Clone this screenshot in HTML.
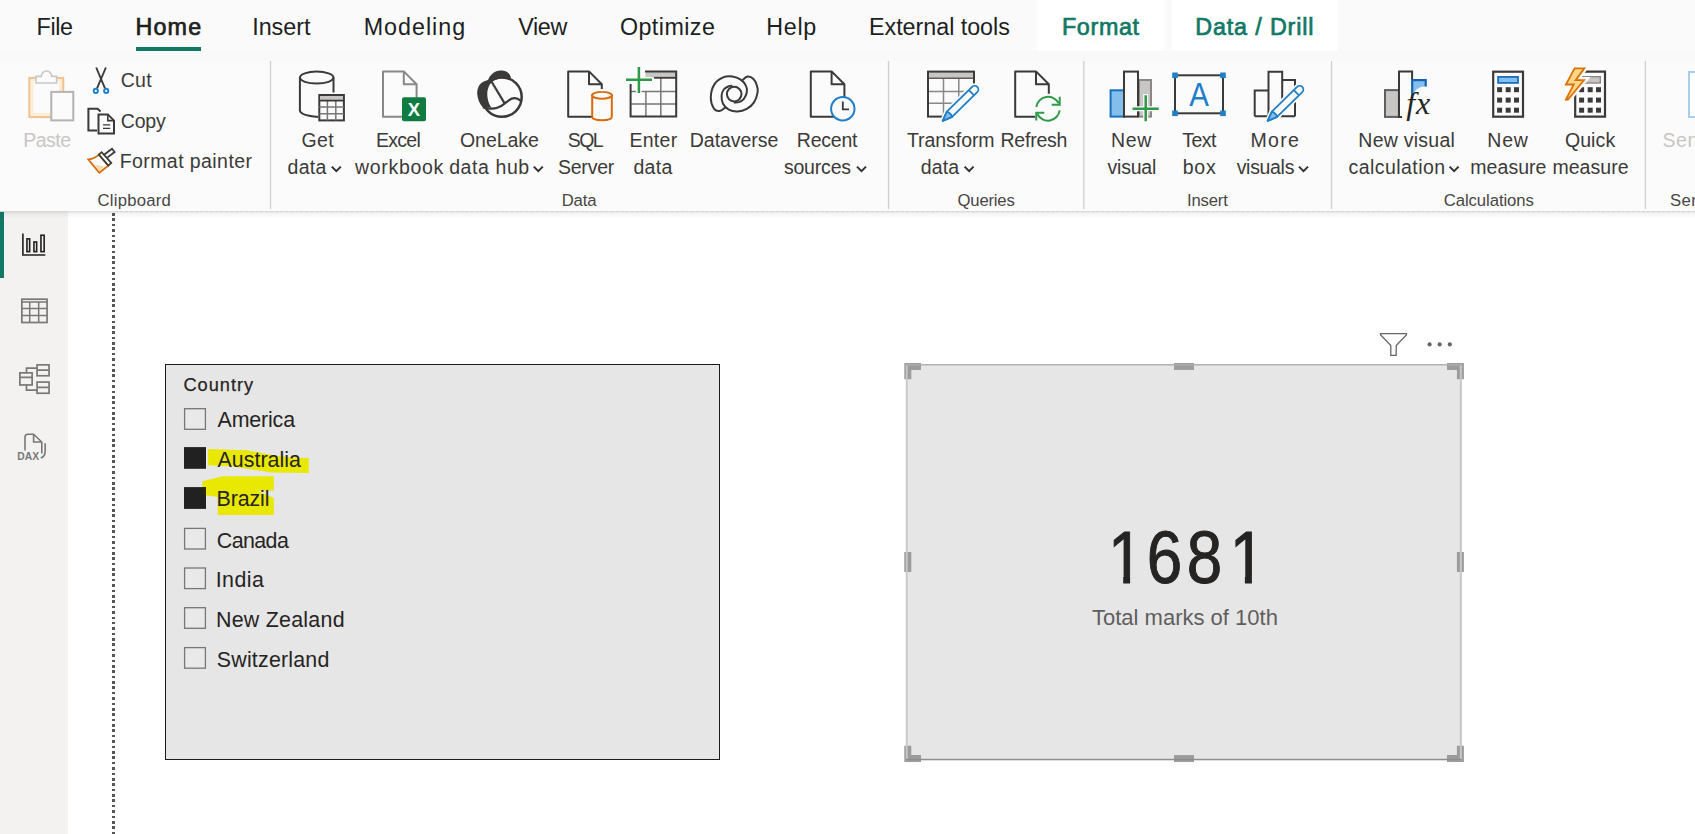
<!DOCTYPE html>
<html><head><meta charset="utf-8"><title>Power BI</title>
<style>
html,body{margin:0;padding:0}
body{width:1695px;height:834px;position:relative;overflow:hidden;background:#fff;font-family:'Liberation Sans',sans-serif}
.t{position:absolute;white-space:pre}
.abs{position:absolute}
</style></head>
<body>
<!-- backgrounds -->
<div class="abs" style="left:0;top:0;width:1695px;height:60px;background:#fafafa"></div>
<div class="abs" style="left:0;top:51px;width:1695px;height:9.500px;background:#f9f9f9"></div>
<div class="abs" style="left:0;top:60.500px;width:1695px;height:150.500px;background:#fbfbfb"></div>
<div class="abs" style="left:1037px;top:0;width:128px;height:51px;background:#fff"></div>
<div class="abs" style="left:1172px;top:0;width:166px;height:51px;background:#fff"></div>
<div class="abs" style="left:136px;top:47px;width:65px;height:4px;background:#117865"></div>
<!-- sidebar -->
<div class="abs" style="left:0;top:211px;width:68px;height:623px;background:#f3f2f1"></div>
<div class="abs" style="left:0;top:212px;width:4px;height:66px;background:#117865"></div>
<!-- canvas dotted line -->
<div class="abs" style="left:112.200px;top:212.800px;width:2.600px;height:622px;background:repeating-linear-gradient(to bottom,#555 0,#555 2.600px,transparent 2.600px,transparent 5.380px)"></div>
<div class="abs" style="left:0;top:211px;width:1695px;height:7px;background:linear-gradient(rgba(0,0,0,0.130),rgba(0,0,0,0.040) 40%,rgba(0,0,0,0))"></div>
<div class="abs" style="left:115px;top:211px;width:1580px;height:0;border-top:1px dashed #d4d4d4"></div>
<!-- slicer -->
<div class="abs" style="left:165px;top:364px;width:553px;height:394px;background:#e6e6e6;border:1.3px solid #1b1b1b"></div>
<!-- card -->
<div class="abs" style="left:906px;top:364px;width:556px;height:396.300px;background:#e6e6e6"></div>
<svg class="abs" style="left:0;top:0" width="1695" height="834" viewBox="0 0 1695 834" fill="none" stroke-linecap="butt" stroke-linejoin="miter">
<!-- group dividers -->
<g stroke="#d2d0ce" stroke-width="1.3">
<path d="M270.5,61V209M888.5,61V209M1083.8,61V209M1331.5,61V209M1645.4,61V209"/>
</g>
<!-- chevrons -->
<g transform="translate(331.8,166.6)"><path d="M0,0L4.5,4.5L9,0" stroke="#323130" stroke-width="2"/></g>
<g transform="translate(533.8,166.6)"><path d="M0,0L4.5,4.5L9,0" stroke="#323130" stroke-width="2"/></g>
<g transform="translate(857,166.6)"><path d="M0,0L4.5,4.5L9,0" stroke="#323130" stroke-width="2"/></g>
<g transform="translate(964.6,166.6)"><path d="M0,0L4.5,4.5L9,0" stroke="#323130" stroke-width="2"/></g>
<g transform="translate(1299,166.6)"><path d="M0,0L4.5,4.5L9,0" stroke="#323130" stroke-width="2"/></g>
<g transform="translate(1449.6,166.6)"><path d="M0,0L4.5,4.5L9,0" stroke="#323130" stroke-width="2"/></g>

<!-- Paste (disabled) -->
<g stroke-width="2">
<rect x="29.300" y="77.900" width="34" height="39.200" fill="#faefd6" stroke="#f2c193"/>
<rect x="33.500" y="81" width="25.500" height="32" fill="#fbfbfb" stroke="none"/>
<path d="M36,83V76.400H41.300a5.200,5.400 0 0 1 10.400,0H56.600V83Z" fill="#fbfbfb" stroke="#c8c8c8" stroke-width="1.600"/>
<rect x="51.300" y="91.900" width="22" height="28.500" fill="#fbfbfb" stroke="#b4b3b2"/>
</g>
<!-- Cut -->
<g stroke="#3b3a39" stroke-width="1.900">
<path d="M96.2,67.5L105,88.3M105.9,67.5L97,88.3"/>
</g>
<g stroke="#1f7fc9" stroke-width="1.900"><circle cx="95.800" cy="90.900" r="2.100"/><circle cx="106.200" cy="90.900" r="2.100"/></g>
<!-- Copy -->
<g stroke="#3b3a39" stroke-width="2">
<path d="M97,130.5H88.4V108.8H97.6L100.6,111.6"/>
<path d="M98.5,114.4H107.8L114,120.6V133.5H98.5Z" fill="#fbfbfb"/>
<path d="M107.8,114.4V120.6H114" stroke-width="1.6"/>
<path d="M103,124.9H110.2M103,128.4H110.2" stroke-width="1.4"/>
</g>
<!-- Format painter -->
<g stroke-width="1.8">
<path d="M88.3,159.4Q95,158.5 98.9,154.6L108.3,165.6L99.3,172.8Z" stroke="#d86b0d" fill="#fbfbfb"/>
<path d="M94.5,164.4L104,166.6L99.5,171.5Z" fill="#fbd9a6" stroke="none"/>
<path d="M98.9,154.6L101.6,152.2L111.3,163L108.3,165.6Z" stroke="#3b3a39" fill="#fbfbfb"/>
<path d="M104.3,154.5L112,148.8L114.6,152L107.3,157.6" stroke="#3b3a39"/>
</g>

<!-- Get data -->
<g stroke="#3b3a39" stroke-width="2">
<ellipse cx="316.7" cy="77.6" rx="16.8" ry="6"/>
<path d="M299.900,77.600V110.800Q301,115.600 318,117M333.500,77.600V92.500"/>
</g>
<rect x="319.300" y="95" width="24.600" height="25.400" fill="#fbfbfb" stroke="#3b3a39" stroke-width="2"/>
<rect x="320.3" y="96" width="22.6" height="4.2" fill="#c8c6c4"/>
<path d="M319.300,107H343.900M319.300,113.800H343.900M327.400,100.400V120.400M335.800,100.400V120.400" stroke="#797775" stroke-width="1.500"/><path d="M319.300,100.600H343.900" stroke="#3b3a39" stroke-width="1.800"/>
<!-- Excel -->
<g transform="translate(382,0)" stroke="#8a8886" stroke-width="2"><path d="M1,71.400H21.800L34.600,84.200V116.800H1Z M21.800,71.400V84.200H34.600" stroke-linejoin="round"/></g>
<rect x="402" y="97.2" width="24" height="24" rx="2" fill="#107c41"/>
<text x="414" y="116" text-anchor="middle" font-family="'Liberation Sans',sans-serif" font-weight="700" font-size="18.5" fill="#fff">X</text>
<!-- OneLake -->
<circle cx="502" cy="97.100" r="19.700" stroke="#3b3a39" stroke-width="2.500"/>
<path d="M482.900,107.400C479.500,104 477.500,99 477.200,93.800C477,88 479.500,83.500 482.900,81.900C485,80.900 487,80.500 488,80.100C489,77 490.500,75.500 491.600,74.400C494,72 496.500,70.900 498.800,70.800C500.500,70.500 502,70.500 503.800,70.800C506.500,71.300 508,72.500 508.800,73.600C510,75 510.800,76.800 511,78.300L511.0,78.5C509.6,78.5 505.1,78.0 502.4,78.3C499.6,78.6 496.4,79.5 494.5,80.3C492.6,81.1 492.0,81.6 490.9,83.0C489.8,84.4 488.6,86.7 488.0,88.7C487.4,90.7 487.2,92.9 487.3,95.2C487.4,97.5 488.0,100.3 488.7,102.4C489.4,104.5 491.1,106.9 491.6,107.8Z" fill="#3b3a39"/>
<g stroke="#3b3a39" stroke-width="2.200"><path d="M491.300,81.300L504.500,103.100"/><path d="M482.900,107.200C486,108.500 493,109.500 497.300,107.800C503,106 505.500,102.500 508.800,100.300C512,98 515,97.800 517.500,98.800C519,99.500 520.300,100.500 521,101.300"/></g>
<!-- SQL Server -->
<g transform="translate(567.200,0)" stroke="#3b3a39" stroke-width="2"><path d="M1,71.400H21.800L34.600,84.200V116.800H1Z M21.800,71.400V84.200H34.600" stroke-linejoin="round"/></g>
<g stroke="#d86b0d" stroke-width="2">
<path d="M592.200,95.300V116.500Q592.200,120.200 602,120.200T611.800,116.500V95.300Z" fill="#fbfbfb"/>
<ellipse cx="602" cy="95.300" rx="9.800" ry="3.500" fill="#fbfbfb"/>
</g>
<rect x="589.700" y="89" width="24.600" height="2.200" fill="#fbfbfb"/>
<!-- Enter data -->
<rect x="645.500" y="71.800" width="31" height="6" fill="#c8c6c4"/>
<path d="M645.900,91.600V116.500M660.800,78V116.500M630.600,91.600H676.200M630.600,104H676.200" stroke="#797775" stroke-width="1.500"/>
<path d="M654.100,77.800H676.200" stroke="#3b3a39" stroke-width="1.800"/>
<path d="M645,71.600H676.200V116.600H630.600V84" stroke="#3b3a39" stroke-width="2"/>
<path d="M626,79.700H652M638.900,67V93" stroke="#fbfbfb" stroke-width="5.500"/>
<path d="M626,79.700H652M638.900,67V93" stroke="#2e9a48" stroke-width="2.500"/>
<!-- Dataverse -->
<g stroke="#3b3a39" stroke-width="2">
<path d="M725.5,107.4C724.5,108.0 721.4,110.9 719.4,111.0C717.4,111.2 715.1,110.4 713.7,108.2C712.2,105.9 710.7,101.3 710.8,97.4C710.9,93.4 712.2,87.8 714.4,84.4C716.5,81.1 720.7,78.5 723.7,77.2C726.7,75.9 729.6,76.2 732.4,76.5C735.1,76.9 738.0,77.8 740.3,79.4C742.6,80.9 745.0,83.7 746.0,85.9C747.1,88.0 747.1,90.2 746.8,92.3C746.4,94.5 745.2,97.2 743.9,98.8C742.6,100.4 740.5,101.5 738.8,102.1C737.2,102.6 734.7,102.4 733.8,102.4"/>
<path d="M742.4,80.1C743.3,79.5 745.7,76.8 747.5,76.5C749.3,76.3 751.7,77.2 753.2,78.7C754.8,80.1 756.1,82.9 756.8,85.1C757.6,87.4 758.0,89.5 757.6,92.3C757.1,95.2 755.8,99.7 754.0,102.4C752.2,105.2 749.5,107.4 746.8,108.9C744.0,110.4 740.4,111.3 737.4,111.4C734.4,111.5 731.2,110.9 728.8,109.6C726.4,108.3 724.2,106.1 723.0,103.8C721.8,101.6 721.5,98.3 721.6,95.9C721.7,93.5 722.5,91.1 723.7,89.5C724.9,87.8 727.3,86.8 728.8,86.2C730.2,85.6 731.8,85.8 732.4,85.7"/>
<circle cx="734.200" cy="94.100" r="7.300"/>
</g>
<!-- Recent sources -->
<g transform="translate(809.8,0)" stroke="#3b3a39" stroke-width="2"><path d="M1,71.400H21.800L34.600,84.200V116.800H1Z M21.800,71.400V84.200H34.600" stroke-linejoin="round"/></g>
<circle cx="842.8" cy="108.7" r="11.7" fill="#fbfbfb" stroke="#1f7fc9" stroke-width="2"/>
<path d="M842.8,101.6V109.4H849" stroke="#3b3a39" stroke-width="1.8"/>
<!-- Transform data -->
<rect x="928" y="72" width="46" height="6.3" fill="#c8c6c4"/>
<path d="M943.5,78V116.5M958.8,78V116.5M928,91.600H974M928,103.200H974" stroke="#8a8886" stroke-width="1.500"/><path d="M928,78.200H974" stroke="#605e5c" stroke-width="1.500"/>
<rect x="928" y="71.6" width="46" height="45" stroke="#3b3a39" stroke-width="2"/>
<path d="M942,122L977.500,86.500V122Z" fill="#fbfbfb"/>
<g transform="translate(942.700,120.900) rotate(-44.500)" stroke="#1f7fc9" stroke-width="1.800" stroke-linejoin="round"><path d="M0,0L9.5,-3.700H44.800a3.700,3.700 0 0 1 0,7.400H9.500Z" stroke="#fbfbfb" stroke-width="5"/><path d="M0,0L9.500,-3.700H44.800a3.700,3.700 0 0 1 0,7.400H9.500Z" fill="#fbfbfb"/><path d="M0,0L9.500,-3.700Q11.500,0 9.500,3.700Z" fill="#83beec"/><path d="M40.300,-3.700V3.700"/></g>
<!-- Refresh -->
<g transform="translate(1014.2,0)" stroke="#3b3a39" stroke-width="2"><path d="M1,71.400H21.800L34.600,84.200V116.800H1Z M21.800,71.400V84.200H34.600" stroke-linejoin="round"/></g>
<circle cx="1048" cy="108.700" r="15" fill="#fbfbfb"/>
<g stroke="#2e9a48" stroke-width="2">
<path d="M1036.300,107A11.800,11.800 0 0 1 1058.600,103.400"/>
<path d="M1059.700,110.400A11.800,11.800 0 0 1 1037.400,114"/>
<path d="M1059.700,96.800V104.700H1051.700"/>
<path d="M1036.300,120.600V112.700H1044.300"/>
</g>
<!-- New visual -->
<rect x="1139" y="80" width="12" height="36.600" fill="#c8c6c4" stroke="#8a8886" stroke-width="2"/>
<rect x="1110.600" y="90.300" width="13.400" height="26.300" fill="#83beec" stroke="#1a6fc0" stroke-width="2"/>
<rect x="1124" y="71.600" width="14" height="45" fill="#fbfbfb" stroke="#3b3a39" stroke-width="2"/>
<path d="M1145.700,94V122.500M1131.500,108.700H1160" stroke="#fbfbfb" stroke-width="5"/>
<path d="M1145.700,95.300V121.300M1132.500,108.700H1158.700" stroke="#2e9a48" stroke-width="2.5"/>
<!-- Text box -->
<rect x="1175" y="75.300" width="48" height="38" stroke="#3b3a39" stroke-width="2"/>
<g fill="#1f7fc9"><rect x="1172.200" y="72.500" width="5.600" height="5.600"/><rect x="1220.200" y="72.500" width="5.600" height="5.600"/><rect x="1172.200" y="110.500" width="5.600" height="5.600"/><rect x="1220.200" y="110.500" width="5.600" height="5.600"/></g>
<text transform="translate(1199,105.900) scale(0.900,1)" x="0" y="0" text-anchor="middle" font-family="'Liberation Sans',sans-serif" font-size="32.700" fill="#1f7fc9">A</text>
<!-- More visuals -->
<g stroke="#3b3a39" stroke-width="2">
<path d="M1254.700,116.300V90.600H1268.500M1268.500,116.300V71.700H1282.200V116.300M1282.200,80H1295V116.300M1254.700,116.300H1295"/>
</g>
<g transform="translate(1267.700,120.900) rotate(-44.500)" stroke="#1f7fc9" stroke-width="1.800" stroke-linejoin="round"><path d="M0,0L9.5,-3.700H44.800a3.700,3.700 0 0 1 0,7.400H9.500Z" stroke="#fbfbfb" stroke-width="5"/><path d="M0,0L9.500,-3.700H44.800a3.700,3.700 0 0 1 0,7.400H9.500Z" fill="#fbfbfb"/><path d="M0,0L9.500,-3.700Q11.500,0 9.500,3.700Z" fill="#83beec"/><path d="M40.300,-3.700V3.700"/></g>
<!-- New visual calculation -->
<rect x="1385" y="90.100" width="13.900" height="26.800" fill="#c8c6c4" stroke="#605e5c" stroke-width="2"/>
<path d="M1402,116.900H1399V71.400H1412.100V80" stroke="#3b3a39" stroke-width="2"/>
<rect x="1412.200" y="80.100" width="13.500" height="16" fill="#83beec" stroke="#1462b5" stroke-width="2.200"/>
<circle cx="1425" cy="100" r="13.500" fill="#fbfbfb"/>
<text x="1406.300" y="113.800" font-family="'Liberation Serif',serif" font-style="italic" font-size="32" letter-spacing="0.800" fill="#252423">fx</text>
<!-- New measure -->
<rect x="1493.200" y="71.700" width="29.800" height="45" stroke="#3b3a39" stroke-width="2.200"/>
<rect x="1498.100" y="76.900" width="19.900" height="6" fill="#83beec" stroke="#1a6fc0" stroke-width="1.800"/>
<g fill="#3b3a39"><rect x="1497.1" y="87.2" width="5" height="5"/><rect x="1505.7" y="87.2" width="5" height="5"/><rect x="1514.0" y="87.2" width="5" height="5"/><rect x="1497.1" y="97.6" width="5" height="5"/><rect x="1505.7" y="97.6" width="5" height="5"/><rect x="1514.0" y="97.6" width="5" height="5"/><rect x="1497.1" y="107.7" width="5" height="5"/><rect x="1505.7" y="107.7" width="5" height="5"/><rect x="1514.0" y="107.7" width="5" height="5"/></g>
<!-- Quick measure -->
<path d="M1584,71.700H1605V116.700H1575.200V94" stroke="#3b3a39" stroke-width="2.200"/>
<rect x="1582" y="76.700" width="18.300" height="6.300" fill="#c8c6c4" stroke="#8a8886" stroke-width="1.400"/>
<g fill="#3b3a39"><rect x="1579.1" y="87.2" width="5" height="5"/><rect x="1587.7" y="87.2" width="5" height="5"/><rect x="1596.0" y="87.2" width="5" height="5"/><rect x="1579.1" y="97.6" width="5" height="5"/><rect x="1587.7" y="97.6" width="5" height="5"/><rect x="1596.0" y="97.6" width="5" height="5"/><rect x="1579.1" y="107.7" width="5" height="5"/><rect x="1587.7" y="107.7" width="5" height="5"/><rect x="1596.0" y="107.7" width="5" height="5"/></g>
<path d="M1574.100,67.400H1585.900L1577.300,79.300H1585.900L1568.300,100.500H1564.400L1572.300,85.400H1564.400Z" stroke="#fbfbfb" stroke-width="4.500"/>
<path d="M1574.600,68.300H1584.300L1575.700,80.200H1584L1567.900,99.600H1565.900L1573.800,84.500H1565.900Z" fill="#f9d88c" stroke="#e07000" stroke-width="1.800" stroke-linejoin="miter"/>
<!-- right-edge partial icon -->
<rect x="1689" y="72" width="12" height="45" fill="#fdfdfd" stroke="#a9cdee" stroke-width="2"/>

<!-- sidebar icons -->
<g stroke="#201f1e" stroke-width="1.600">
<path d="M22.900,233.400V255H45.300"/>
<rect x="26.950" y="238.850" width="2.700" height="12.800"/><rect x="33.950" y="241.950" width="2.700" height="9.700"/><rect x="40.950" y="235.250" width="3.200" height="16.400"/>
</g>
<g stroke="#7a7876" stroke-width="1.500">
<rect x="21.850" y="299.200" width="25.200" height="23.300" stroke-width="1.700"/>
<path d="M21.800,301.900H47M21.800,308.600H47M21.800,315.600H47M29.700,301.900V322.500M38.700,301.900V322.500"/>
</g>
<g stroke="#7a7876" stroke-width="1.700">
<rect x="19.850" y="372.850" width="12.300" height="12.100"/><rect x="37.050" y="364.850" width="12" height="10.900"/><rect x="37.050" y="382.050" width="12" height="11.200"/>
<path d="M19.800,377.300H32.200M37,370.100H49M37,387.300H49M26.500,372.800V368.200H37M26.500,385V390.200H37"/>
</g>
<g stroke="#7a7876" stroke-width="1.600">
<path d="M25,450.500V437Q25,434.200 27.800,434.200H33.600L41.800,442V453.500M33.600,434.200V442H41.800"/>
<path d="M45.200,443.200V451Q45.200,456.500 40.800,458"/>
</g>
<text x="17.300" y="459.700" font-family="'Liberation Sans',sans-serif" font-weight="700" font-size="10.800" fill="#7a7876" textLength="21.800" lengthAdjust="spacingAndGlyphs">DAX</text>

<!-- highlights -->
<path d="M208.100,449.100L246.900,450.300L270.900,454.700L290,457.500L308.700,458V472.900L270.900,472.400L251.700,469.500L232.500,466.600L208.100,465.200Z" fill="#e8e800"/>
<path d="M202.300,481.300L222.900,476.300H273.800V490.400L257.500,490.900L273.800,498.100V514.900H217.700V497L202.800,494.700Z" fill="#e8e800"/>
<!-- checkboxes -->
<g stroke="#777" stroke-width="1.300" fill="#e9e9e9">
<rect x="184.600" y="408.700" width="20.800" height="20.600"/>
<rect x="184.600" y="528.400" width="20.800" height="20.600"/>
<rect x="184.600" y="568" width="20.800" height="20.600"/>
<rect x="184.600" y="607.700" width="20.800" height="20.600"/>
<rect x="184.600" y="647.600" width="20.800" height="20.600"/>
</g>
<rect x="184" y="447.100" width="22" height="21.700" fill="#212121"/>
<rect x="184" y="487.100" width="22" height="21.800" fill="#212121"/>
<path d="M202.800,487.100H206V494.900L202.800,494.600Z" fill="#2a2a00"/>

<!-- card handles -->
<g fill="#9c9c9c">
<path d="M904.300,363H921V369.900H911.300V379.300H904.300Z"/>
<path d="M1463.900,363H1447V369.900H1456.900V379.300H1463.900Z"/>
<path d="M904.300,762H921V755.100H911.300V745.800H904.300Z"/>
<path d="M1463.900,762H1447V755.100H1456.900V745.800H1463.900Z"/>
<rect x="1174" y="363" width="20" height="6.900"/>
<rect x="1174" y="755.100" width="20" height="6.900"/>
<rect x="904.300" y="552" width="7" height="20"/>
<rect x="1456.900" y="552" width="7" height="20"/>
</g>
<rect x="905.800" y="364" width="1.900" height="396.300" fill="#c8c8c8"/><rect x="1459.900" y="364" width="1.900" height="396.300" fill="#c8c8c8"/>
<rect x="905.800" y="364.100" width="556" height="1.400" fill="#adadad"/><rect x="905.800" y="758.800" width="556" height="1.500" fill="#8e8e8e"/>
<!-- filter + more -->
<path d="M1380.500,333.700H1406.500V334.700L1396.200,345.500V355.300H1390.800V345.500L1380.500,334.700Z" stroke="#666" stroke-width="1.300"/>
<g fill="#666"><circle cx="1429.600" cy="344.400" r="2.100"/><circle cx="1439.700" cy="344.400" r="2.100"/><circle cx="1449.800" cy="344.400" r="2.100"/></g>
<!-- card value -->
<text transform="scale(0.85,1)" x="1303.41 1349.06 1396.12 1446.71" y="583.500" font-family="'Liberation Sans',sans-serif" font-size="75" fill="#252423" stroke="#252423" stroke-width="1">1681</text>
<rect x="1110.5" y="576.300" width="12.7" height="9" fill="#e6e6e6"/><rect x="1130.1" y="576.300" width="12.8" height="9" fill="#e6e6e6"/>
<rect x="1232.2" y="576.300" width="12.7" height="9" fill="#e6e6e6"/><rect x="1251.9" y="576.300" width="12.8" height="9" fill="#e6e6e6"/>
</svg>

<span class="t" style="left:36.50px;top:16.00px;font-size:23.3px;line-height:23.3px;letter-spacing:-0.333px;color:#201f1e;">File</span>
<span class="t" style="left:135.50px;top:16.00px;font-size:23.3px;line-height:23.3px;letter-spacing:1.167px;color:#201f1e;-webkit-text-stroke:0.7px #201f1e;">Home</span>
<span class="t" style="left:252.20px;top:16.00px;font-size:23.3px;line-height:23.3px;letter-spacing:0.000px;color:#201f1e;">Insert</span>
<span class="t" style="left:363.70px;top:16.00px;font-size:23.3px;line-height:23.3px;letter-spacing:0.986px;color:#201f1e;">Modeling</span>
<span class="t" style="left:518.20px;top:16.00px;font-size:23.3px;line-height:23.3px;letter-spacing:-0.333px;color:#201f1e;">View</span>
<span class="t" style="left:619.90px;top:16.00px;font-size:23.3px;line-height:23.3px;letter-spacing:0.443px;color:#201f1e;">Optimize</span>
<span class="t" style="left:766.30px;top:16.00px;font-size:23.3px;line-height:23.3px;letter-spacing:0.700px;color:#201f1e;">Help</span>
<span class="t" style="left:869.00px;top:16.00px;font-size:23.3px;line-height:23.3px;letter-spacing:-0.023px;color:#201f1e;">External tools</span>
<span class="t" style="left:1061.90px;top:16.00px;font-size:23.3px;line-height:23.3px;letter-spacing:0.680px;color:#117865;-webkit-text-stroke:0.7px #117865;">Format</span>
<span class="t" style="left:1195.30px;top:16.00px;font-size:23.3px;line-height:23.3px;letter-spacing:0.855px;color:#117865;-webkit-text-stroke:0.7px #117865;">Data / Drill</span>
<span class="t" style="left:23.20px;top:131.00px;font-size:19.5px;line-height:19.5px;letter-spacing:-0.500px;color:#c8c6c4;">Paste</span>
<span class="t" style="left:120.70px;top:71.00px;font-size:19.5px;line-height:19.5px;letter-spacing:0.350px;color:#3b3a39;">Cut</span>
<span class="t" style="left:120.70px;top:112.00px;font-size:19.5px;line-height:19.5px;letter-spacing:-0.133px;color:#3b3a39;">Copy</span>
<span class="t" style="left:119.70px;top:152.00px;font-size:19.5px;line-height:19.5px;letter-spacing:0.423px;color:#3b3a39;">Format painter</span>
<span class="t" style="left:301.50px;top:131.00px;font-size:19.5px;line-height:19.5px;letter-spacing:0.350px;color:#3b3a39;">Get</span>
<span class="t" style="left:287.60px;top:158.00px;font-size:19.5px;line-height:19.5px;letter-spacing:0.233px;color:#3b3a39;">data</span>
<span class="t" style="left:376.10px;top:131.00px;font-size:19.5px;line-height:19.5px;letter-spacing:-0.750px;color:#3b3a39;">Excel</span>
<span class="t" style="left:355.10px;top:158.00px;font-size:19.5px;line-height:19.5px;letter-spacing:0.671px;color:#3b3a39;">workbook</span>
<span class="t" style="left:460.00px;top:131.00px;font-size:19.5px;line-height:19.5px;letter-spacing:-0.067px;color:#3b3a39;">OneLake</span>
<span class="t" style="left:449.20px;top:158.00px;font-size:19.5px;line-height:19.5px;letter-spacing:0.586px;color:#3b3a39;">data hub</span>
<span class="t" style="left:567.80px;top:131.00px;font-size:19.5px;line-height:19.5px;letter-spacing:-1.650px;color:#3b3a39;">SQL</span>
<span class="t" style="left:558.00px;top:158.00px;font-size:19.5px;line-height:19.5px;letter-spacing:-0.240px;color:#3b3a39;">Server</span>
<span class="t" style="left:629.40px;top:131.00px;font-size:19.5px;line-height:19.5px;letter-spacing:0.300px;color:#3b3a39;">Enter</span>
<span class="t" style="left:633.40px;top:158.00px;font-size:19.5px;line-height:19.5px;letter-spacing:0.300px;color:#3b3a39;">data</span>
<span class="t" style="left:689.80px;top:131.00px;font-size:19.5px;line-height:19.5px;letter-spacing:-0.037px;color:#3b3a39;">Dataverse</span>
<span class="t" style="left:796.80px;top:131.00px;font-size:19.5px;line-height:19.5px;letter-spacing:-0.220px;color:#3b3a39;">Recent</span>
<span class="t" style="left:783.90px;top:158.00px;font-size:19.5px;line-height:19.5px;letter-spacing:-0.183px;color:#3b3a39;">sources</span>
<span class="t" style="left:906.90px;top:131.00px;font-size:19.5px;line-height:19.5px;letter-spacing:-0.050px;color:#3b3a39;">Transform</span>
<span class="t" style="left:920.80px;top:158.00px;font-size:19.5px;line-height:19.5px;letter-spacing:0.100px;color:#3b3a39;">data</span>
<span class="t" style="left:1000.40px;top:131.00px;font-size:19.5px;line-height:19.5px;letter-spacing:-0.200px;color:#3b3a39;">Refresh</span>
<span class="t" style="left:1111.00px;top:131.00px;font-size:19.5px;line-height:19.5px;letter-spacing:0.650px;color:#3b3a39;">New</span>
<span class="t" style="left:1107.60px;top:158.00px;font-size:19.5px;line-height:19.5px;letter-spacing:-0.240px;color:#3b3a39;">visual</span>
<span class="t" style="left:1182.30px;top:131.00px;font-size:19.5px;line-height:19.5px;letter-spacing:-0.533px;color:#3b3a39;">Text</span>
<span class="t" style="left:1182.80px;top:158.00px;font-size:19.5px;line-height:19.5px;letter-spacing:0.700px;color:#3b3a39;">box</span>
<span class="t" style="left:1250.50px;top:131.00px;font-size:19.5px;line-height:19.5px;letter-spacing:1.300px;color:#3b3a39;">More</span>
<span class="t" style="left:1236.70px;top:158.00px;font-size:19.5px;line-height:19.5px;letter-spacing:-0.317px;color:#3b3a39;">visuals</span>
<span class="t" style="left:1358.30px;top:131.00px;font-size:19.5px;line-height:19.5px;letter-spacing:0.256px;color:#3b3a39;">New visual</span>
<span class="t" style="left:1348.50px;top:158.00px;font-size:19.5px;line-height:19.5px;letter-spacing:0.440px;color:#3b3a39;">calculation</span>
<span class="t" style="left:1487.30px;top:131.00px;font-size:19.5px;line-height:19.5px;letter-spacing:0.750px;color:#3b3a39;">New</span>
<span class="t" style="left:1470.30px;top:158.00px;font-size:19.5px;line-height:19.5px;letter-spacing:0.050px;color:#3b3a39;">measure</span>
<span class="t" style="left:1564.90px;top:131.00px;font-size:19.5px;line-height:19.5px;letter-spacing:0.100px;color:#3b3a39;">Quick</span>
<span class="t" style="left:1552.40px;top:158.00px;font-size:19.5px;line-height:19.5px;letter-spacing:0.050px;color:#3b3a39;">measure</span>
<span class="t" style="left:1662.60px;top:131.00px;font-size:19.5px;line-height:19.5px;letter-spacing:0.500px;color:#c8c6c4;">Sensitivity</span>
<span class="t" style="left:97.50px;top:193.00px;font-size:16.7px;line-height:16.7px;letter-spacing:0.238px;color:#484644;">Clipboard</span>
<span class="t" style="left:561.70px;top:193.00px;font-size:16.7px;line-height:16.7px;letter-spacing:-0.133px;color:#484644;">Data</span>
<span class="t" style="left:957.60px;top:193.00px;font-size:16.7px;line-height:16.7px;letter-spacing:-0.217px;color:#484644;">Queries</span>
<span class="t" style="left:1186.90px;top:193.00px;font-size:16.7px;line-height:16.7px;letter-spacing:-0.140px;color:#484644;">Insert</span>
<span class="t" style="left:1443.70px;top:193.00px;font-size:16.7px;line-height:16.7px;letter-spacing:-0.064px;color:#484644;">Calculations</span>
<span class="t" style="left:1670.00px;top:193.00px;font-size:16.7px;line-height:16.7px;letter-spacing:0.400px;color:#484644;">Sensitivity</span>
<span class="t" style="left:183.50px;top:376.00px;font-size:18.2px;line-height:18.2px;letter-spacing:0.983px;color:#252423;-webkit-text-stroke:0.25px #252423;">Country</span>
<span class="t" style="left:217.60px;top:410.00px;font-size:21.4px;line-height:21.4px;letter-spacing:-0.167px;color:#252423;">America</span>
<span class="t" style="left:217.60px;top:450.00px;font-size:21.4px;line-height:21.4px;letter-spacing:0.012px;color:#252423;">Australia</span>
<span class="t" style="left:216.60px;top:489.00px;font-size:21.4px;line-height:21.4px;letter-spacing:-0.120px;color:#252423;">Brazil</span>
<span class="t" style="left:216.80px;top:531.00px;font-size:21.4px;line-height:21.4px;letter-spacing:-0.580px;color:#252423;">Canada</span>
<span class="t" style="left:215.70px;top:570.00px;font-size:21.4px;line-height:21.4px;letter-spacing:0.425px;color:#252423;">India</span>
<span class="t" style="left:216.00px;top:610.00px;font-size:21.4px;line-height:21.4px;letter-spacing:0.250px;color:#252423;">New Zealand</span>
<span class="t" style="left:216.80px;top:650.00px;font-size:21.4px;line-height:21.4px;letter-spacing:0.200px;color:#252423;">Switzerland</span>
<span class="t" style="left:1092.00px;top:607.00px;font-size:22px;line-height:22px;letter-spacing:0.000px;color:#605e5c;">Total marks of 10th</span>
</body></html>
